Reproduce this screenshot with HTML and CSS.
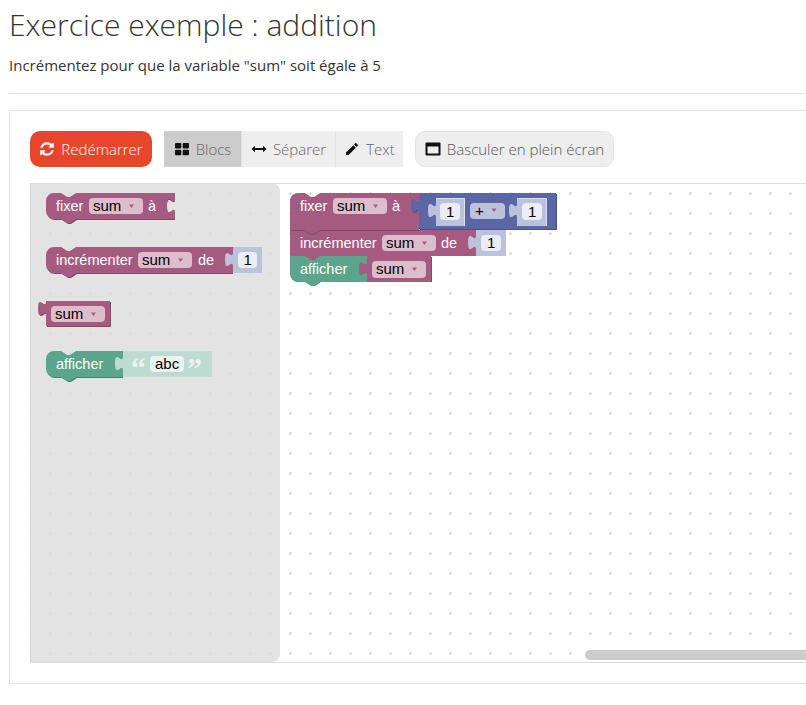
FILE: index.html
```html
<!DOCTYPE html>
<html lang="fr">
<head>
    <meta charset="UTF-8">
    <meta name="viewport" content="width=device-width, initial-scale=1.0">
    <title>Exercice exemple : addition</title>
    <link rel="stylesheet" href="styles.css">
</head>
<body>
    <div id="page">
        <h1>Exercice exemple : addition</h1>
        <p class="statement">Incrémentez pour que la variable "sum" soit égale à 5</p>
        <hr>
        <div id="exercise">
            <div class="toolbar">
                <button class="btn btn-restart">
                    <svg class="icon" viewBox="0 0 1792 1792"><path d="M1639 1056q0 5-1 7-64 268-268 434.500t-478 166.500q-146 0-282.500-55t-243.500-157l-129 129q-19 19-45 19t-45-19-19-45v-448q0-26 19-45t45-19h448q26 0 45 19t19 45-19 45l-137 137q71 66 161 102t187 36q134 0 250-65t186-179q11-17 53-117 8-23 30-23h192q13 0 22.500 9.500t9.500 22.500zm25-800v448q0 26-19 45t-45 19h-448q-26 0-45-19t-19-45 19-45l138-138q-148-137-349-137-134 0-250 65t-186 179q-11 17-53 117-8 23-30 23h-199q-13 0-22.500-9.500t-9.500-22.500v-7q65-268 270-434.500t480-166.500q146 0 284 55.500t245 156.500l130-129q19-19 45-19t45 19 19 45z"/></svg>
                    Redémarrer
                </button>
                <div class="btn-group">
                    <button class="tab tab-active">
                        <svg class="icon" viewBox="0 0 16 16"><rect x="1" y="2" width="6.300" height="5.500" rx="1"/><rect x="8.700" y="2" width="6.300" height="5.500" rx="1"/><rect x="1" y="8.800" width="6.300" height="5.500" rx="1"/><rect x="8.700" y="8.800" width="6.300" height="5.500" rx="1"/></svg>
                        Blocs
                    </button>
                    <button class="tab">
                        <svg class="icon" viewBox="0 0 16 16"><path d="M0.500 8L4 4.800V7H12V4.800L15.500 8L12 11.200V9H4V11.200Z"/></svg>
                        Séparer
                    </button>
                    <button class="tab">
                        <svg class="icon" viewBox="0 0 24 24"><path d="M3 17.250V21h3.750L17.810 9.940l-3.750-3.750L3 17.250zM20.710 7.040c.39-.39.39-1.020 0-1.410l-2.340-2.340c-.39-.39-1.020-.39-1.410 0l-1.830 1.830 3.750 3.750 1.830-1.830z"/></svg>
                        Text
                    </button>
                </div>
                <button class="btn btn-fullscreen">
                    <svg class="icon" viewBox="0 0 16 16"><path fill-rule="evenodd" d="M1.500 1.500H14.500A1 1 0 0 1 15.500 2.500V13.500A1 1 0 0 1 14.500 14.500H1.500A1 1 0 0 1 .5 13.500V2.500A1 1 0 0 1 1.500 1.500ZM2.500 5.500V12.500H13.500V5.500Z"/></svg>
                    Basculer en plein écran
                </button>
            </div>

            <!-- blockly workspace, viewBox is in page coordinates -->
            <svg id="workspace" viewBox="30 183 776 480">
                <defs>
                    <pattern id="grid" x="0" y="3" width="20" height="20" patternUnits="userSpaceOnUse">
                        <path class="grid-dot" d="M10.500 9V12M9 10.500H12"/>
                    </pattern>
                </defs>
                <rect x="30" y="183" width="776" height="480" fill="url(#grid)"/>
                <path class="frame" d="M30 183.500H806M30 662.500H806"/>

                <!-- toolbox -->
                <path class="flyout" d="M30 183H272a8 8 0 0 1 8 8V654a8 8 0 0 1-8 8H30Z"/>
                <path class="flyout-edge" d="M30.500 183V662"/>

                <!-- fixer sum a -->
                <g>
                    <path class="var-dark" transform="translate(1 1)" d="M54 193H61l6 4h3l6-4H174v5c0 10-8-8-8 7.500s8-2.500 8 7.500V219H76l-6 4h-3l-6-4H54a8 8 0 0 1-8-8V201a8 8 0 0 1 8-8Z"/>
                    <path class="var" d="M54 193H61l6 4h3l6-4H175v5c0 10-8-8-8 7.500s8-2.500 8 7.500V219H76l-6 4h-3l-6-4H54a8 8 0 0 1-8-8V201a8 8 0 0 1 8-8Z"/>
                    <text class="label" x="56" y="211">fixer</text>
                    <rect class="field" x="89" y="198" width="54" height="16" rx="4"/>
                    <text class="value" x="93" y="211">sum</text>
                    <path class="arrow" d="M129 204.500h5l-2.500 3.500Z"/>
                    <text class="label" x="148" y="211">à</text>
                </g>

                <!-- incrementer sum de 1 -->
                <g>
                    <path class="var-dark" transform="translate(1 1)" d="M54 247H61l6 4h3l6-4H232V273H76l-6 4h-3l-6-4H54a8 8 0 0 1-8-8V255a8 8 0 0 1 8-8Z"/>
                    <path class="var" d="M54 247H61l6 4h3l6-4H233V273H76l-6 4h-3l-6-4H54a8 8 0 0 1-8-8V255a8 8 0 0 1 8-8Z"/>
                    <text class="label" x="56" y="265">incrémenter</text>
                    <rect class="field" x="138" y="252" width="54" height="16" rx="4"/>
                    <text class="value" x="142" y="265">sum</text>
                    <path class="arrow" d="M178 258.500h5l-2.500 3.500Z"/>
                    <text class="label" x="198" y="265">de</text>
                    <path class="math-shadow" d="M233 247H262V273H233V267c0-10-8 8-8-7.500s8 2.500 8-7.500Z"/>
                    <rect class="num-field" x="238" y="252" width="19" height="16" rx="4"/>
                    <text class="value" x="243.500" y="265">1</text>
                </g>

                <!-- sum -->
                <g>
                    <path class="var-dark" transform="translate(1 1)" d="M46 301H110V326H46V316c0-10-8 8-8-7.500s8 2.500 8-7.500Z"/>
                    <path class="var" d="M46 301H110V326H46V316c0-10-8 8-8-7.500s8 2.500 8-7.500Z"/>
                    <rect class="field" x="51" y="306" width="54" height="16" rx="4"/>
                    <text class="value" x="55" y="319">sum</text>
                    <path class="arrow" d="M91 312.500h5l-2.500 3.500Z"/>
                </g>

                <!-- afficher abc -->
                <g>
                    <path class="text-dark" transform="translate(1 1)" d="M54 351H61l6 4h3l6-4H122V377H76l-6 4h-3l-6-4H54a8 8 0 0 1-8-8V359a8 8 0 0 1 8-8Z"/>
                    <path class="text-block" d="M54 351H61l6 4h3l6-4H123V377H76l-6 4h-3l-6-4H54a8 8 0 0 1-8-8V359a8 8 0 0 1 8-8Z"/>
                    <text class="label" x="56" y="369">afficher</text>
                    <path class="text-shadow" d="M123 351H212V377H123V371c0-10-8 8-8-7.500s8 2.500 8-7.500Z"/>
                    <text class="quote" x="131" y="378">“</text>
                    <rect class="str-field" x="150" y="356" width="34" height="16" rx="4"/>
                    <text class="value" x="155" y="369">abc</text>
                    <text class="quote" x="187" y="378">”</text>
                </g>

                <!-- program: afficher sum -->
                <g>
                    <path class="text-dark" transform="translate(1 1)" d="M290 256H366V281H320l-6 4h-3l-6-4H298a8 8 0 0 1-8-8Z"/>
                    <path class="text-block" d="M290 256H367V282H320l-6 4h-3l-6-4H298a8 8 0 0 1-8-8Z"/>
                    <text class="label" x="300" y="274">afficher</text>
                    <path class="var-dark" transform="translate(1 1)" d="M367 256H431V281H367Z"/>
                    <path class="var" d="M367 256H431V282H367V276c0-10-8 8-8-7.500s8 2.500 8-7.500Z"/>
                    <rect class="field" x="372" y="261" width="54" height="17" rx="4"/>
                    <text class="value" x="376" y="274">sum</text>
                    <path class="arrow" d="M412 267.500h5l-2.500 3.500Z"/>
                </g>

                <!-- program: incrementer sum de 1 -->
                <g>
                    <path class="var" d="M290 230H476V256H320l-6 4h-3l-6-4H290Z"/>
                    <path class="joint" d="M290 230.500H305l6 4h3l6-4H419"/>
                    <text class="label" x="300" y="248">incrémenter</text>
                    <rect class="field" x="382" y="235" width="54" height="16" rx="4"/>
                    <text class="value" x="386" y="248">sum</text>
                    <path class="arrow" d="M422 241.500h5l-2.500 3.500Z"/>
                    <text class="label" x="441" y="248">de</text>
                    <path class="math-shadow" d="M476 230H506V256H476V250c0-10-8 8-8-7.500s8 2.500 8-7.500Z"/>
                    <rect class="num-field" x="481" y="235" width="20" height="16" rx="4"/>
                    <text class="value" x="487" y="248">1</text>
                </g>

                <!-- program: fixer sum a 1 + 1 -->
                <g>
                    <path class="var" d="M298 193H305l6 4h3l6-4H419V230H290V201a8 8 0 0 1 8-8Z"/>
                    <text class="label" x="300" y="211">fixer</text>
                    <rect class="field" x="333" y="198" width="54" height="16" rx="4"/>
                    <text class="value" x="337" y="211">sum</text>
                    <path class="arrow" d="M373 204.500h5l-2.500 3.500Z"/>
                    <text class="label" x="392" y="211">à</text>

                    <path class="math-dark" transform="translate(1 1)" d="M419 193H556V229H419V213c0-10-8 8-8-7.500s8 2.500 8-7.500Z"/>
                    <path class="math" d="M419 193H556V229H419V213c0-10-8 8-8-7.500s8 2.500 8-7.500Z"/>
                    <path class="math-shadow" d="M436 198H465V226H436V218c0-10-8 8-8-7.500s8 2.500 8-7.500Z"/>
                    <path class="shadow-light" d="M436 198.500H464.500V226"/>
                    <rect class="num-field" x="440" y="203" width="20" height="17" rx="4"/>
                    <text class="value" x="446" y="217">1</text>
                    <rect class="op-field" x="470" y="203" width="35" height="16" rx="4"/>
                    <text class="value" x="475" y="216">+</text>
                    <path class="arrow" d="M491.500 208.500h5l-2.500 3.500Z"/>
                    <path class="math-shadow" d="M517 198H547V226H517V218c0-10-8 8-8-7.500s8 2.500 8-7.500Z"/>
                    <path class="shadow-light" d="M517 198.500H546.500V226"/>
                    <rect class="num-field" x="522" y="203" width="20" height="17" rx="4"/>
                    <text class="value" x="528" y="217">1</text>
                </g>

                <rect class="scrollbar" x="585" y="650" width="240" height="10" rx="5"/>
            </svg>
        </div>
    </div>
</body>
</html>
```

FILE: styles.css
```css
html, body {
    margin: 0;
    overflow: hidden;
}
body {
    font-family: "Open Sans", sans-serif;
    background-color: #fff;
    color: #333;
}
#page {
    width: 1000px;
    padding-left: 9px;
}
h1 {
    margin: 0;
    padding-top: 5px;
    font-size: 30px;
    line-height: 40px;
    font-weight: 300;
    color: #333;
}
.statement {
    margin: 0;
    padding-top: 10px;
    font-size: 15px;
    line-height: 20px;
}
hr {
    margin: 18px 0 16px;
    border: 0;
    border-top: 1px solid #e3e3e3;
}
#exercise {
    padding: 20px;
    border: 1px solid #e3e3e3;
    height: 532px;
}
.toolbar {
    display: flex;
    gap: 12px;
    height: 36px;
    margin-bottom: 16px;
}
.icon {
    width: 16px;
    height: 16px;
    fill: currentColor;
    flex-shrink: 0;
}
.btn, .tab {
    display: flex;
    align-items: center;
    gap: 6px;
    height: 36px;
    font-family: inherit;
    font-size: 15px;
    font-weight: 300;
    border: 0;
    padding: 0;
}
.btn {
    border-radius: 10px;
}
.btn-restart {
    width: 122px;
    justify-content: center;
    background-color: #e8462a;
    color: #fff;
}
.btn-fullscreen {
    width: 199px;
    justify-content: center;
    box-sizing: border-box;
    background-color: #eee;
    border: 1px solid #e5e5e5;
    color: #555;
}
.btn-fullscreen .icon {
    color: #111;
}
.btn-group {
    display: flex;
}
.tab {
    justify-content: center;
    box-sizing: border-box;
    width: 94px;
    background-color: #eee;
    border-left: 1px solid #e3e3e3;
    color: #666;
}
.tab:first-child {
    width: 77px;
    border-left: 0;
}
.tab:last-child {
    width: 68px;
}
.tab-active {
    background-color: #ccc;
}
.tab .icon {
    color: #111;
}
#workspace {
    display: block;
    width: 776px;
    height: 480px;
}
.grid-dot {
    fill: none;
    stroke: #d4d4d4;
    stroke-width: 1;
}
.frame {
    fill: none;
    stroke: #ddd;
    stroke-width: 1;
}
.flyout {
    fill: #dcdcdc;
    fill-opacity: 0.8;
}
.flyout-edge {
    stroke: #d2d2d2;
    stroke-width: 1;
}
.scrollbar {
    fill: #ccc;
}
.var { fill: #a55b80; }
.var-dark { fill: #844966; }
.joint {
    fill: none;
    stroke: #844966;
    stroke-width: 1;
}
.math { fill: #5b67a5; }
.math-dark { fill: #495284; }
.math-shadow { fill: #bdc2db; }
.shadow-light {
    fill: none;
    stroke: #dee0ed;
    stroke-width: 1;
}
.text-block { fill: #5ba58c; }
.text-dark { fill: #498470; }
.text-shadow { fill: #bddbd1; }
.field { fill: #dbbdcc; }
.num-field { fill: #ebedf4; }
.op-field { fill: #bdc2db; }
.str-field { fill: #ebf4f1; }
.arrow { fill: #a55b80; }
svg text {
    font-family: "Liberation Sans", Arial, sans-serif;
    font-size: 14.500px;
}
.label { fill: #fff; }
svg text.value {
    fill: #000;
    font-size: 15px;
}
svg text.quote {
    font-family: "Liberation Serif", serif;
    font-size: 30px;
    font-weight: bold;
    fill: #e8f3ef;
}
```
